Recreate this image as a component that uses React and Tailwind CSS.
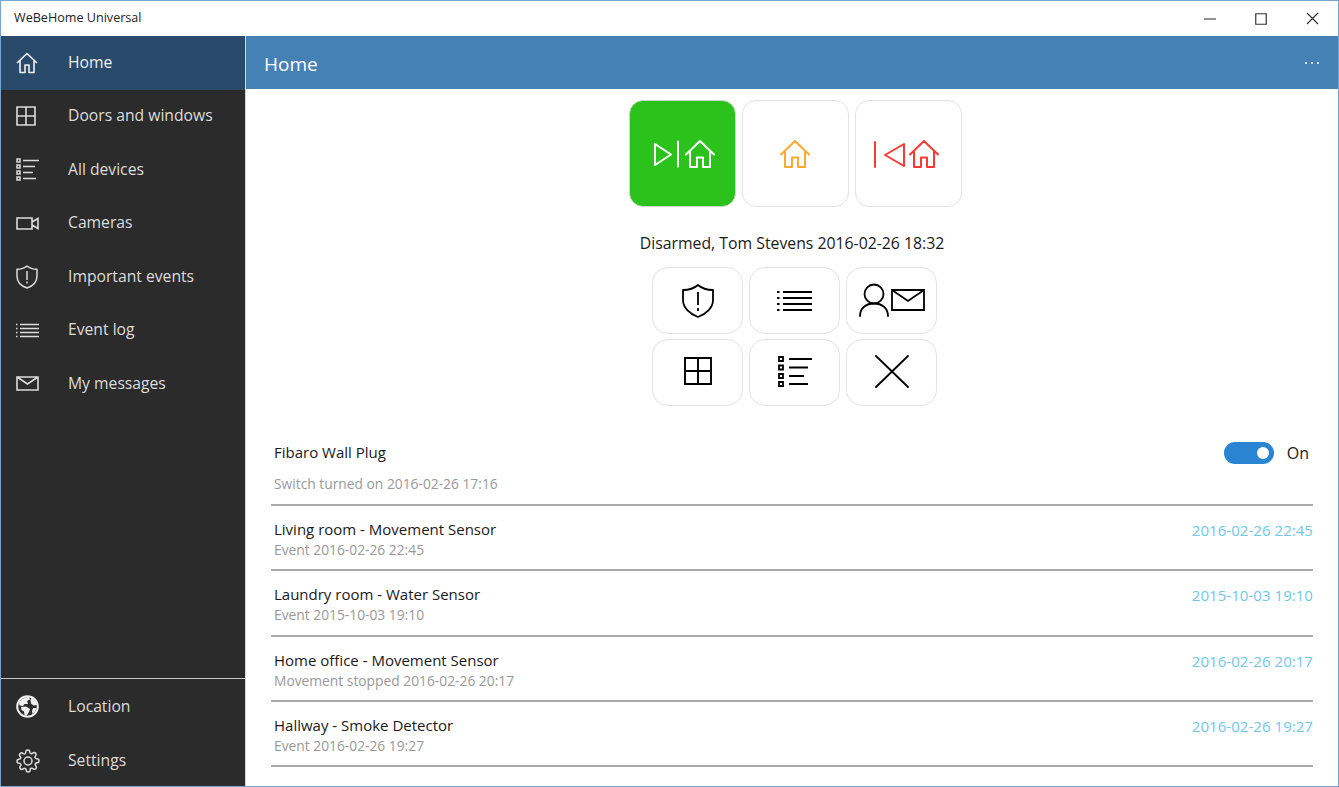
function House() {
  return <path d="M1 14.500 L15 1 L29 14.500 M5 11.500 V27 H12 V17.500 H18 V27 H25 V11.500" fill="none" strokeWidth="2" strokeLinecap="round" strokeLinejoin="round" />;
}
const I = {
  home: <svg width="22" height="22" viewBox="0 0 22 22" fill="none" stroke="currentColor" strokeWidth="1.600" strokeLinejoin="round"><path d="M1 11 L11 1.500 L21 11 M4 8.500 V20.500 H9 V13 H13 V20.500 H18 V8.500" /></svg>,
  grid: <svg width="20" height="20" viewBox="0 0 20 20" fill="none" stroke="currentColor" strokeWidth="1.600"><path d="M1 1H19V19H1Z M10 1V19 M1 10H19" /></svg>,
  devices: <svg width="24" height="23" viewBox="0 0 24 23" fill="none" stroke="currentColor" strokeWidth="1.500"><path d="M1 1h3v3H1z M1 7h3v3H1z M1 13h3v3H1z M1 19h3v3H1z M7 2.500H23 M7 8.500H19 M7 14.500H17 M7 20.500H20" /></svg>,
  camera: <svg width="23" height="13" viewBox="0 0 23 13" fill="none" stroke="currentColor" strokeWidth="1.600"><path d="M1 1H16V12H1Z M16 5 L22 1.500 V11.500 L16 8" /></svg>,
  shield: <svg width="22" height="24" viewBox="0 0 22 24" fill="none" stroke="currentColor" strokeWidth="1.500" strokeLinejoin="round"><path d="M11 1 C13.500 3.200 17.500 4.300 21 4.300 V11 C21 16.500 17 21 11 23 C5 21 1 16.500 1 11 V4.300 C4.500 4.300 8.500 3.200 11 1Z" /><path d="M11 6V15" /><path d="M11 16.500V18.500" /></svg>,
  log: <svg width="23" height="15" viewBox="0 0 23 15" fill="none" stroke="currentColor" strokeWidth="1.500"><path d="M4 1.500H23 M4 5.500H23 M4 9.500H23 M4 13.500H23" /><path d="M0 1.500H1.500 M0 5.500H1.500 M0 9.500H1.500 M0 13.500H1.500" /></svg>,
  mail: <svg width="23" height="15" viewBox="0 0 23 15" fill="none" stroke="currentColor" strokeWidth="1.600"><path d="M1 1H22V14H1Z M1 1 L11.500 8 L22 1" /></svg>,
  globe: <svg width="23" height="23" viewBox="0 0 23 23"><circle cx="11.500" cy="11.500" r="10.300" fill="#2b2b2b" stroke="#f0f0f0" strokeWidth="2" /><path d="M3 8 C5 4 9 2 13 2 L14 4.500 L11 6 L12 9 L8.500 9 L7 11 L3.500 10.500Z M15 3 C18 4 20 6.500 21 10 L17.500 10.500 L15 8.500 L14.500 5.500Z M5 12 L10 11.500 L14 14 L13 17 L10.500 21 L8.500 20 L8 16.500 L5.500 15Z M17 13 L20.500 13 C20 15.500 18.500 18 16.500 19 L16 16Z" fill="#f0f0f0" /></svg>,
  gear: <svg width="24" height="24" viewBox="0 0 24 24" fill="none" stroke="currentColor" strokeWidth="1.500" strokeLinecap="round" strokeLinejoin="round"><circle cx="12" cy="12" r="4" /><path d="M19.400 15a1.650 1.650 0 0 0 .33 1.820l.06.06a2 2 0 1 1-2.830 2.830l-.06-.06a1.650 1.650 0 0 0-2.800 1.170V21a2 2 0 1 1-4 0v-.09a1.650 1.650 0 0 0-2.820-1.110l-.06.06a2 2 0 1 1-2.830-2.830l.06-.06a1.650 1.650 0 0 0-1.170-2.800H3a2 2 0 1 1 0-4h.09a1.650 1.650 0 0 0 1.110-2.820l-.06-.06a2 2 0 1 1 2.830-2.830l.06.06a1.650 1.650 0 0 0 2.800-1.170V3a2 2 0 1 1 4 0v.09a1.650 1.650 0 0 0 2.820 1.110l.06-.06a2 2 0 1 1 2.830 2.830l-.06.06a1.650 1.650 0 0 0 1.170 2.800H21a2 2 0 1 1 0 4h-.09a1.650 1.650 0 0 0-1.510 1z" /></svg>,
};

const nav = [
  ["Home", I.home], ["Doors and windows", I.grid], ["All devices", I.devices], ["Cameras", I.camera],
  ["Important events", I.shield], ["Event log", I.log], ["My messages", I.mail],
];

function NavItem({ label, icon, active, extra = "" }) {
  return (
    <div className={`flex h-[53.5px] items-center ${extra} ${active ? "bg-[#2a4a6b] text-[#f0f0f0]" : "text-[#dcdcdc]"}`}>
      <div className="flex w-[67px] shrink-0 items-center justify-start pl-[15px]">{icon}</div>
      <span className="text-[15.700px]">{label}</span>
    </div>
  );
}

const rows = [
  ["Living room - Movement Sensor", "Event 2016-02-26 22:45", "2016-02-26 22:45"],
  ["Laundry room - Water Sensor", "Event 2015-10-03 19:10", "2015-10-03 19:10"],
  ["Home office - Movement Sensor", "Movement stopped 2016-02-26 20:17", "2016-02-26 20:17"],
  ["Hallway - Smoke Detector", "Event 2016-02-26 19:27", "2016-02-26 19:27"],
];

function Big({ active, children }) {
  return (
    <div className={`flex h-[107px] w-[107px] items-center justify-center rounded-[14px] border pt-[2px] ${active ? "border-[#c9d9c5] bg-[#2bc31b]" : "border-[#e3e3e3] bg-white"}`}>
      {children}
    </div>
  );
}
function Small({ low, children }) {
  return <div className={`flex h-[67px] w-[91px] items-center justify-center rounded-[16px] border border-[#e3e3e3] bg-white text-black ${low ? "pb-[2px]" : ""}`}>{children}</div>;
}

export default function App() {
  return (
    <div className="flex h-[787px] w-[1339px] flex-col overflow-hidden border border-[#76a5cf] bg-white font-['Open_Sans',sans-serif]">
      <div className="flex h-[35px] shrink-0 items-center justify-between bg-white">
        <span className="pl-[13px] text-[12.600px] text-[#222]">WeBeHome Universal</span>
        <div className="flex items-center text-[#333]">
          <svg width="12" height="2" viewBox="0 0 12 2" className="mr-[39px]"><path d="M0 1H12" stroke="#777" strokeWidth="1.600" /></svg>
          <svg width="12" height="12" viewBox="0 0 12 12" className="mr-[39px]"><path d="M.75.75H11.250V11.250H.75Z" fill="none" stroke="#333" strokeWidth="1.200" /></svg>
          <svg width="13" height="13" viewBox="0 0 13 13" className="mr-[19px]"><path d="M1 1L12 12M12 1L1 12" fill="none" stroke="#333" strokeWidth="1.200" /></svg>
        </div>
      </div>
      <div className="flex min-h-0 flex-1">
        <aside className="flex w-[244px] shrink-0 flex-col bg-[#2b2b2b]">
          <div className="flex-1">
            {nav.map(([l, ic], i) => <NavItem key={l} label={l} icon={ic} active={i === 0} />)}
          </div>
          <div className="border-t border-[#c8c8c8]">
            <NavItem label="Location" icon={I.globe} extra="pt-[2px]" />
            <NavItem label="Settings" icon={I.gear} extra="pt-[4px]" />
          </div>
        </aside>
        <main className="flex min-w-0 flex-1 flex-col border-l border-[#d8d8d8]">
          <header className="flex h-[53px] shrink-0 items-center justify-between bg-[#4581b4] pl-[18px] pr-[19px]">
            <span className="pt-[3px] text-[19px] text-white">Home</span>
            <div className="flex gap-[4px]">
              <span className="h-[2px] w-[2px] rounded-full bg-white" /><span className="h-[2px] w-[2px] rounded-full bg-white" /><span className="h-[2px] w-[2px] rounded-full bg-white" />
            </div>
          </header>
          <div className="flex flex-col items-center pt-[11px]">
            <div className="ml-[6px] flex gap-[6px]">
              <Big active>
                <svg width="62" height="29" viewBox="0 0 62 29" fill="none" stroke="#fff" strokeWidth="2" strokeLinejoin="round" strokeLinecap="round" className="ml-[6px]">
                  <path d="M1 4V25L17 14.500Z" /><path d="M24 1.500V26.500" />
                  <g transform="translate(31 0)"><House /></g>
                </svg>
              </Big>
              <Big>
                <svg width="30" height="29" viewBox="0 0 30 29" stroke="#ffa833"><House /></svg>
              </Big>
              <Big>
                <svg width="66" height="29" viewBox="0 0 66 29" fill="none" stroke="#f93a32" strokeWidth="2" strokeLinejoin="round" strokeLinecap="round" className="mr-[4px]">
                  <path d="M2 2V27" /><path d="M31 4V26L12 15Z" />
                  <g transform="translate(36 0)"><House /></g>
                </svg>
              </Big>
            </div>
            <div className="mt-[25px] text-[15.800px] leading-[22px] text-[#1a1a1a]">Disarmed, Tom Stevens 2016-02-26 18:32</div>
            <div className="ml-[5px] mt-[13px] grid grid-cols-[91px_91px_91px] gap-x-[6px] gap-y-[4.500px]">
              <Small>
                <svg width="32" height="34" viewBox="0 0 32 34" fill="none" stroke="#000" strokeWidth="1.800" strokeLinejoin="round"><path d="M16 1 C20 4.500 26 6 31 6 V16 C31 24 24 30 16 33 C8 30 1 24 1 16 V6 C6 6 12 4.500 16 1Z" /><path d="M16 8V21M16 24V27" /></svg>
              </Small>
              <Small>
                <svg width="35" height="21" viewBox="0 0 35 21" fill="none" stroke="#000" strokeWidth="1.800"><path d="M6 2H35M6 8H35M6 14H35M6 20H35" /><path d="M0 2H2.500M0 8H2.500M0 14H2.500M0 20H2.500" /></svg>
              </Small>
              <Small>
                <svg width="66" height="35" viewBox="0 0 66 35" fill="none" stroke="#000" strokeWidth="1.800" strokeLinecap="round"><circle cx="15" cy="11" r="9.500" /><path d="M1 33C1 25 7 20.500 15 20.500S29 25 29 33" /><path d="M33 7H65V27H33Z M33 7L49 18L65 7" strokeLinecap="butt" /></svg>
              </Small>
              <Small low>
                <svg width="28" height="28" viewBox="0 0 28 28" fill="none" stroke="#000" strokeWidth="1.900"><path d="M1 1H27V27H1Z M14 1V27 M1 14H27" /></svg>
              </Small>
              <Small low>
                <svg width="34" height="31" viewBox="0 0 34 31" fill="none" stroke="#000" strokeWidth="1.800"><path d="M1 1H5V5H1Z M1 9.500H5V13.500H1Z M1 18H5V22H1Z M1 26H5V30H1Z" /><path d="M11 3H34M11 11.500H30M11 20H26M11 28H30" /></svg>
              </Small>
              <Small low>
                <svg width="34" height="33" viewBox="0 0 34 33" fill="none" stroke="#000" strokeWidth="1.800" strokeLinecap="round"><path d="M1 1L33 32M33 1L1 32" /></svg>
              </Small>
            </div>
          </div>
          <div className="mt-[32.500px] px-[25px]">
            <div className="border-b-2 border-[#a9a9a9] pb-[11px] pl-[3px]">
              <div className="flex h-[29px] items-center justify-between">
                <span className="text-[15px] text-[#1a1a1a]">Fibaro Wall Plug</span>
                <div className="flex items-center gap-[13px] pr-[4px]">
                  <div className="flex h-[22px] w-[50px] items-center justify-end rounded-full bg-[#2a84d2] pr-[5px]">
                    <span className="h-[12px] w-[12px] rounded-full bg-white" />
                  </div>
                  <span className="text-[16px] text-[#1a1a1a]">On</span>
                </div>
              </div>
              <div className="mt-[8px] text-[13.800px] leading-[18px] text-[#999]">Switch turned on 2016-02-26 17:16</div>
            </div>
            {rows.map(([t, s, d]) => (
              <div key={t} className="flex h-[65.250px] items-start justify-between border-b-2 border-[#a9a9a9] pl-[3px] pt-[13px]">
                <div>
                  <div className="text-[15px] leading-[20px] text-[#1a1a1a]">{t}</div>
                  <div className="text-[13.800px] leading-[22px] text-[#999]">{s}</div>
                </div>
                <div className="mt-px text-[15.100px] leading-[20px] text-[#72c6ea]">{d}</div>
              </div>
            ))}
          </div>
        </main>
      </div>
    </div>
  );
}
